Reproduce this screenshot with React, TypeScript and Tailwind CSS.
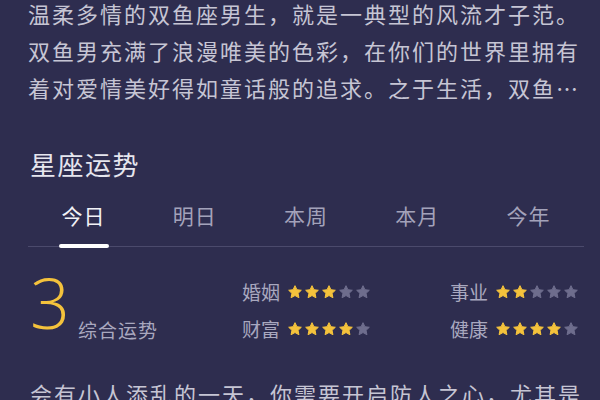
const intro = [
  "温柔多情的双鱼座男生，就是一典型的风流才子范。",
  "双鱼男充满了浪漫唯美的色彩，在你们的世界里拥有",
  "着对爱情美好得如童话般的追求。之于生活，双鱼…",
];

const tabs = ["今日", "明日", "本周", "本月", "今年"];

const ratings = [
  { label: "婚姻", value: 3 },
  { label: "事业", value: 2 },
  { label: "财富", value: 4 },
  { label: "健康", value: 4 },
];

function Star({ on }: { on: boolean }) {
  return (
    <svg viewBox="0 0 24 24" className="h-[16px] w-[16px]">
      <path
        d="M12 2.5l2.9 6.1 6.6.8-4.9 4.6 1.3 6.6L12 17.3l-5.9 3.3 1.3-6.6-4.9-4.6 6.6-.8z"
        fill={on ? "#f4c23c" : "#6e6d8d"}
        stroke={on ? "#f4c23c" : "#6e6d8d"}
        strokeWidth="1.5"
        strokeLinejoin="round"
      />
    </svg>
  );
}

function Stars({ value }: { value: number }) {
  return (
    <div className="flex gap-[1px]">
      {[0, 1, 2, 3, 4].map((i) => (
        <Star key={i} on={i < value} />
      ))}
    </div>
  );
}

export default function App() {
  return (
    <div
      className="h-[400px] w-[600px] overflow-hidden bg-[#2e2d4f] px-[28px]"
      style={{ fontFamily: '"Noto Sans CJK SC", "Noto Sans", sans-serif' }}
    >
      <div className="-mt-[5px] text-[22px] leading-[37px] tracking-[2px] text-[#c6c5d4]">
        {intro.map((line) => (
          <div key={line} className="whitespace-nowrap">
            {line}
          </div>
        ))}
      </div>

      <h2 className="mt-[40px] pl-[2px] text-[26px] leading-[36px] tracking-[1.5px] text-[#e6e6ee]">星座运势</h2>

      <div className="mt-[18px] grid w-[556px] grid-cols-5 border-b border-[#4b4a6c]">
        {tabs.map((t, i) => (
          <div key={t} className="flex flex-col items-center">
            <span
              className={
                "text-[21px] leading-[30px] tracking-[1px] " +
                (i === 0 ? "text-[#f2f2f6]" : "text-[#a3a2ba]")
              }
            >
              {t}
            </span>
            <span
              className={
                "mt-[14px] -mb-[2px] h-[4px] w-[50px] rounded-full " + (i === 0 ? "bg-white" : "bg-transparent")
              }
            />
          </div>
        ))}
      </div>

      <div className="mt-[27px] flex items-start">
        <div className="flex w-[214px] shrink-0 items-end pl-[2px]">
          <span
            className="text-[70px] font-light leading-[56px] text-[#f4c23c]"
            style={{ fontFamily: '"Open Sans", sans-serif' }}
          >
            3
          </span>
          <span className="mb-[-14px] ml-[8px] whitespace-nowrap text-[19px] tracking-[1px] text-[#a9a8bf]">
            综合运势
          </span>
        </div>
        <div className="mt-[6px] grid grid-cols-[208px_1fr] gap-y-[13px]">
          {ratings.map((r) => (
            <div key={r.label} className="flex items-center gap-[7px] whitespace-nowrap">
              <span className="text-[19px] leading-[24px] text-[#a9a8bf]">{r.label}</span>
              <Stars value={r.value} />
            </div>
          ))}
        </div>
      </div>

      <div className="mt-[34px] whitespace-nowrap pl-[2px] text-[22px] leading-[37px] tracking-[2px] text-[#c6c5d4]">
        会有小人添乱的一天，你需要开启防人之心，尤其是
      </div>
    </div>
  );
}
